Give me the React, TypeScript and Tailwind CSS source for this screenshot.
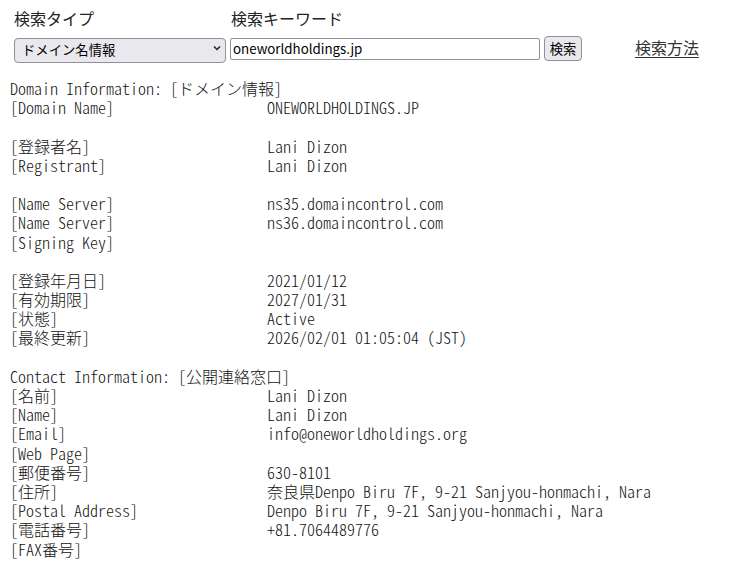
import React from 'react';

const mono = "font-['Noto_Sans_CJK_JP',sans-serif] [font-feature-settings:'hwid'] font-light text-[16px] leading-[19.2px] text-[#111]";

type Row = [string, string] | null | string;

const rows: Row[] = [
  'Domain Information: [ドメイン情報]',
  ['[Domain Name]', 'ONEWORLDHOLDINGS.JP'],
  null,
  ['[登録者名]', 'Lani Dizon'],
  ['[Registrant]', 'Lani Dizon'],
  null,
  ['[Name Server]', 'ns35.domaincontrol.com'],
  ['[Name Server]', 'ns36.domaincontrol.com'],
  ['[Signing Key]', ''],
  null,
  ['[登録年月日]', '2021/01/12'],
  ['[有効期限]', '2027/01/31'],
  ['[状態]', 'Active'],
  ['[最終更新]', '2026/02/01 01:05:04 (JST)'],
  null,
  'Contact Information: [公開連絡窓口]',
  ['[名前]', 'Lani Dizon'],
  ['[Name]', 'Lani Dizon'],
  ['[Email]', 'info@oneworldholdings.org'],
  ['[Web Page]', ''],
  ['[郵便番号]', '630-8101'],
  ['[住所]', '奈良県Denpo Biru 7F, 9-21 Sanjyou-honmachi, Nara'],
  ['[Postal Address]', 'Denpo Biru 7F, 9-21 Sanjyou-honmachi, Nara'],
  ['[電話番号]', '+81.7064489776'],
  ['[FAX番号]', ''],
];

const App = () => {
  return (
    <div className="min-h-screen bg-white font-['Noto_Sans_CJK_JP',sans-serif] text-[#222]">
      {/* Search form */}
      <div className="flex items-end pl-[14px] pt-[6px]">
        <div className="flex flex-col w-[216px]">
          <label className="text-[16px] leading-[24px]">検索タイプ</label>
          <div className="relative mt-[6px] h-[25px] w-[212px]">
            <select
              defaultValue="jp"
              className="h-full w-full appearance-none rounded-[4px] border border-[#8f8f9d] bg-[#e9e9ed] pl-[7px] text-[13.33px] text-black outline-none"
            >
              <option value="jp">ドメイン名情報</option>
            </select>
            <svg
              className="pointer-events-none absolute right-[5px] top-[9px]"
              width="8"
              height="6"
              viewBox="0 0 8 6"
              fill="none"
              stroke="#222"
              strokeWidth="1.5"
            >
              <path d="M1 1.5 L4 4.5 L7 1.5" />
            </svg>
          </div>
        </div>
        <div className="flex flex-col">
          <label className="text-[16px] leading-[24px] pl-[1px]">検索キーワード</label>
          <div className="mt-[6px] flex items-center h-[25px]">
            <input
              defaultValue="oneworldholdings.jp"
              className="h-[22px] w-[310px] rounded-[2px] border border-[#8f8f9d] bg-white px-[2px] text-[13.33px] text-black outline-none"
            />
            <button className="ml-[4px] h-[25px] w-[38px] rounded-[4px] border border-[#8f8f9d] bg-[#e9e9ed] text-[13.33px] text-black">
              検索
            </button>
          </div>
        </div>
        <a href="#" className="ml-[53px] mb-[2px] text-[16px] leading-[24px] text-[#333] underline underline-offset-[3px]">
          検索方法
        </a>
      </div>

      {/* Whois result */}
      <div className={`${mono} pl-[10px] pt-[18px]`}>
        {rows.map((r, i) => {
          if (r === null) return <div key={i} className="h-[19.2px]" />;
          if (typeof r === 'string') return <div key={i} className="h-[19.2px] whitespace-pre">{r}</div>;
          return (
            <div key={i} className="grid h-[19.2px] grid-cols-[257px_1fr] whitespace-pre">
              <span>{r[0]}</span>
              <span>{r[1]}</span>
            </div>
          );
        })}
      </div>
    </div>
  );
};

export default App;
